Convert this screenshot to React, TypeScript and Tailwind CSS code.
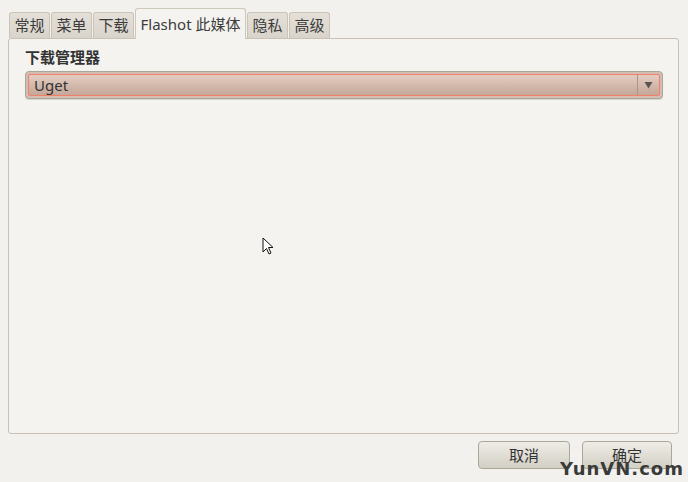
import React from 'react';

const FONT = { fontFamily: '"Noto Sans", "Noto Sans CJK SC", sans-serif' };

const TABS = ['常规', '菜单', '下载', 'Flashot 此媒体', '隐私', '高级'];
const ACTIVE = 3;

export default function App() {
  return (
    <div className="relative w-[688px] h-[482px] bg-[#f2f1ed] text-[#3c3c3c] overflow-hidden" style={FONT}>
      {/* Tabs */}
      <div className="flex items-end pl-[9px] pt-[8px] h-[38px]">
        {TABS.map((t, i) =>
          i === ACTIVE ? (
            <div
              key={t}
              className="relative z-10 w-[111px] h-[31px] mr-px flex items-center justify-center whitespace-nowrap text-[15px] bg-[#f4f3ef] border border-b-0 border-[#cfc8bc] rounded-t-[3px] -mb-px"
            >
              {t}
            </div>
          ) : (
            <div
              key={t}
              className="w-[41px] h-[26px] mr-px flex items-center justify-center text-[15px] bg-gradient-to-b from-[#e4e0d9] to-[#d9d4cb] border border-b-0 border-[#cbc3b6] rounded-t-[3px]"
            >
              {t}
            </div>
          )
        )}
      </div>

      {/* Panel */}
      <div className="ml-[8px] w-[671px] h-[396px] border border-[#c9c1b4] rounded-[3px] bg-[#f4f3ef] pl-[16px] pr-[16px] pt-[9px]">
        <div className="text-[15px] font-bold text-[#333] leading-[18px]">下载管理器</div>
        <div className="mt-[5px] h-[28px] w-[638px] rounded-[4px] border border-[#a9a69c] p-[2px] bg-[#d6bdb1] shadow-[0_1px_0_#d8d4cc]">
          <div className="h-full flex rounded-[2px] border border-[#f0806c] bg-gradient-to-b from-[#e3cdc2] to-[#c4a798]">
            <div className="flex-1 flex items-center pl-[5px] text-[15px] text-[#333]">Uget</div>
            <div className="w-[22px] border-l border-[#a89588] flex items-center justify-center">
              <svg width="9" height="8" viewBox="0 0 9 8">
                <polygon points="0.5,1 8.5,1 4.5,7.5" fill="#5a5550" />
              </svg>
            </div>
          </div>
        </div>
      </div>

      {/* Buttons */}
      <div className="flex justify-end gap-[12px] pr-[16px] mt-[7px]">
        <button className="w-[92px] h-[28px] rounded-[4px] border border-[#aaa699] bg-gradient-to-b from-[#efede7] to-[#d2cfc4] text-[15px] text-[#333]">
          取消
        </button>
        <button className="w-[90px] h-[28px] rounded-[4px] border border-[#aaa699] bg-gradient-to-b from-[#efede7] to-[#d2cfc4] text-[15px] text-[#333]">
          确定
        </button>
      </div>

      {/* Watermark */}
      <div
        className="absolute left-[560px] top-[460px] text-[18px] font-bold text-[#3a3a3a] leading-none tracking-[1px]"
        style={{ fontFamily: '"DejaVu Sans", sans-serif' }}
      >
        YunVN.com
      </div>

      {/* Cursor */}
      <svg className="absolute left-[262px] top-[237px]" width="14" height="20" viewBox="0 0 14 20">
        <path d="M1 1 L1 15 L4.5 11.5 L7 17 L9 16 L6.5 10.5 L11 10.5 Z" fill="#fff" stroke="#111" strokeWidth="1" strokeLinejoin="round" />
      </svg>
    </div>
  );
}
